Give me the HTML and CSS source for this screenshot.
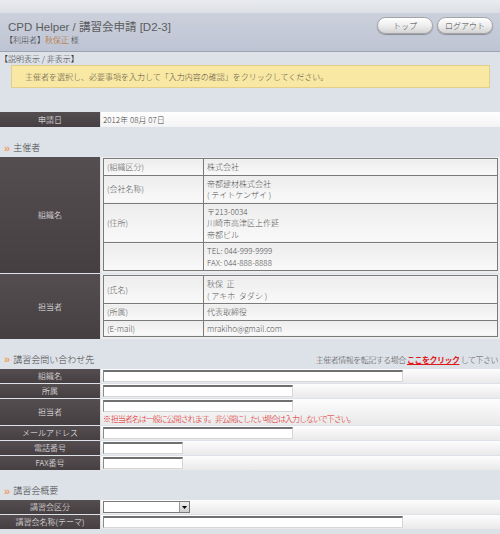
FILE: index.html
```html
<!DOCTYPE html>
<html lang="ja">
<head>
<meta charset="utf-8">
<title>CPD Helper / 講習会申請</title>
<link rel="stylesheet" href="styles.css">
</head>
<body>
<div class="topstrip"></div>
<header class="header">
  <div class="title-block">
    <h1 class="title">CPD Helper / 講習会申請 [D2-3]</h1>
    <div class="user">【利用者】<span class="user-name">秋保正</span> 様</div>
  </div>
  <nav class="buttons">
    <a class="btn" href="#">トップ</a>
    <a class="btn" href="#">ログアウト</a>
  </nav>
</header>

<div class="toggle">【説明表示 / 非表示】</div>
<div class="notice">主催者を選択し、必要事項を入力して「入力内容の確認」をクリックしてください。</div>

<div class="row date-row">
  <div class="label">申請日</div>
  <div class="value">2012年 08月 07日</div>
</div>

<h2 class="section"><span class="mark">»</span>主催者</h2>
<div class="org">
  <div class="row">
    <div class="label">組織名</div>
    <div class="value">
      <table class="info">
        <tr><td class="key">(組織区分)</td><td>株式会社</td></tr>
        <tr><td class="key">(会社名称)</td><td>帝都建材株式会社<br>( テイトケンザイ )</td></tr>
        <tr><td class="key">(住所)</td><td>〒213-0034<br>川崎市高津区上作延<br>帝都ビル</td></tr>
        <tr><td class="key"></td><td>TEL: 044-999-9999<br>FAX: 044-888-8888</td></tr>
      </table>
    </div>
  </div>
  <div class="row">
    <div class="label">担当者</div>
    <div class="value">
      <table class="info">
        <tr><td class="key">(氏名)</td><td>秋保&nbsp; 正<br>( アキホ&nbsp; タダシ )</td></tr>
        <tr><td class="key">(所属)</td><td>代表取締役</td></tr>
        <tr><td class="key">(E-mail)</td><td>mrakiho@gmail.com</td></tr>
      </table>
    </div>
  </div>
</div>

<div class="section split">
  <h2 class="section-title"><span class="mark">»</span>講習会問い合わせ先</h2>
  <div class="copy-link">主催者情報を転記する場合 <a href="#" class="red-link">ここをクリック</a> して下さい</div>
</div>
<div class="form">
  <div class="row"><div class="label">組織名</div><div class="value"><input class="input w300" type="text"></div></div>
  <div class="row"><div class="label">所属</div><div class="value"><input class="input w190" type="text"></div></div>
  <div class="row tall"><div class="label">担当者</div><div class="value"><input class="input w190" type="text"><div class="note">※ 担当者名は一般に公開されます。非公開にしたい場合は入力しないで下さい。</div></div></div>
  <div class="row"><div class="label">メールアドレス</div><div class="value"><input class="input w190" type="text"></div></div>
  <div class="row"><div class="label">電話番号</div><div class="value"><input class="input w80" type="text"></div></div>
  <div class="row"><div class="label">FAX番号</div><div class="value"><input class="input w80" type="text"></div></div>
</div>

<h2 class="section"><span class="mark">»</span>講習会概要</h2>
<div class="form">
  <div class="row"><div class="label">講習会区分</div><div class="value">
    <div class="select"><select class="select-input"><option></option></select><span class="select-btn"><svg width="5" height="3" viewBox="0 0 5 3"><path d="M0 0H5L2.5 3Z" fill="#000"/></svg></span></div>
  </div></div>
  <div class="row"><div class="label">講習会名称(テーマ)</div><div class="value"><input class="input w300" type="text"></div></div>
</div>
</body>
</html>
```
FILE: styles.css
```css
body {
  margin: 0;
  width: 500px;
  background: #dde1e8;
  font-family: "Noto Sans CJK JP", sans-serif;
  font-size: 8px;
  font-weight: 300;
  line-height: 1.2;
  color: #5a5a5a;
}

.topstrip {
  height: 13px;
  background: linear-gradient(#e9ebef, #dcdfe5);
}

.header {
  height: 38px;
  background: linear-gradient(#cbd0dc, #bec4d3);
  border-bottom: 1px solid #9da3b3;
  display: flex;
  justify-content: space-between;
  align-items: flex-start;
  padding: 0 7px 0 5px;
}

.title-block {
  padding-top: 8px;
}

.title {
  margin: 0 0 0 3px;
  font-family: "Liberation Sans", "Noto Sans CJK JP", sans-serif;
  font-size: 11.5px;
  line-height: 13px;
  font-weight: normal;
  color: #5c5c5c;
}

.user {
  font-size: 8px;
  line-height: 10px;
  color: #444;
  margin-top: 1px;
}

.user-name {
  color: #b8610c;
}

.buttons {
  display: flex;
  gap: 4px;
  margin-top: 4px;
}

.btn {
  width: 56px;
  height: 17px;
  box-sizing: border-box;
  border: 1px solid #a3a3a3;
  border-radius: 9px;
  background: linear-gradient(#ffffff, #ececec 55%, #d3d3d3);
  box-shadow: 0 1px 1px rgba(0, 0, 0, 0.3);
  display: flex;
  align-items: center;
  justify-content: center;
  font-size: 8px;
  color: #444;
  text-decoration: none;
}

.toggle {
  margin-top: 2px;
  line-height: 10px;
  color: #333;
}

.notice {
  margin: 1px 10px 0 11px;
  height: 23px;
  box-sizing: border-box;
  border: 1px solid #e3cf88;
  background: #f8e8a3;
  padding-left: 13px;
  line-height: 21px;
  color: #5d5345;
}

.row {
  display: grid;
  grid-template-columns: 100px 1fr;
  column-gap: 1px;
}

.label {
  background: linear-gradient(#554e51, #463f42);
  color: #f4f4f4;
  display: flex;
  align-items: center;
  justify-content: center;
  text-align: center;
}

.date-row {
  margin-top: 24px;
  height: 15px;
}

.date-row .value {
  background: linear-gradient(#ffffff, #f3f3f3);
  padding-left: 2px;
  line-height: 15px;
  color: #444;
}

.section {
  margin: 0;
  height: 30px;
  box-sizing: border-box;
  padding: 0 2px 3px 4px;
  display: flex;
  align-items: flex-end;
  font-size: 9px;
  line-height: 12px;
  font-weight: 300;
  color: #444;
}

.section.split {
  justify-content: space-between;
}

.section-title {
  margin: 0;
  font-size: 9px;
  line-height: 12px;
  font-weight: 300;
  color: #444;
}

.mark {
  font-family: "Liberation Sans", sans-serif;
  font-size: 11px;
  color: #eea060;
  font-weight: bold;
  margin-right: 3px;
}

.copy-link {
  font-size: 8px;
  letter-spacing: -0.5px;
  color: #555;
}

.red-link {
  color: #e01818;
  font-weight: bold;
  text-decoration: underline;
}

.org {
  display: flex;
  flex-direction: column;
  gap: 1px;
}

.org .value {
  background: #ededed;
  padding: 1px 2px 2px;
}

.info {
  width: 100%;
  border-collapse: collapse;
}

.info td {
  border: 1px solid #7a7a7a;
  padding: 2px 3px;
  line-height: 11.5px;
  background: linear-gradient(#ededed, #f9f9f9);
  vertical-align: middle;
  color: #555;
}

.info td.key {
  width: 93px;
}

.form {
  display: flex;
  flex-direction: column;
  gap: 1px;
}

.form .row {
  height: 14px;
}

.form .row.tall {
  height: 26px;
}

.form .value {
  background: linear-gradient(#fdfdfd, #e9e9e9);
  padding: 1px 2px 0;
}

.input {
  display: block;
  height: 12px;
  box-sizing: border-box;
  margin: 0;
  padding: 0;
  border-top: 2px solid #707070;
  border-left: 1px solid #8a8a8a;
  border-right: 1px solid #d6d6d6;
  border-bottom: 1px solid #d6d6d6;
  background: #fff;
  font-size: 8px;
}

.w300 { width: 300px; }
.w190 { width: 190px; }
.w80 { width: 80px; }

.note {
  color: #e02020;
  line-height: 11px;
  margin-top: 1px;
  letter-spacing: -1px;
}

.select {
  display: flex;
  width: 87px;
  height: 12px;
  box-sizing: border-box;
  border: 1px solid #7a7a7a;
  background: #fff;
}

.select-input {
  flex: 1;
  appearance: none;
  border: none;
  background: transparent;
  padding: 0;
  margin: 0;
  font-size: 8px;
  min-width: 0;
}

.select-btn {
  width: 9px;
  display: flex;
  align-items: center;
  justify-content: center;
  background: linear-gradient(#f0f0f0, #cfcfcf);
  border-left: 1px solid #999;
}
```
